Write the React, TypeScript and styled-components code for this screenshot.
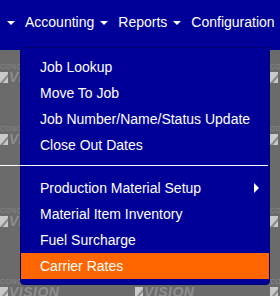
import React from "react";
import styled, { createGlobalStyle } from "styled-components";

const GlobalStyle = createGlobalStyle`
  html, body {
    margin: 0;
    padding: 0;
    background: #6b6b6b;
  }
  * {
    box-sizing: border-box;
  }
`;

const Page = styled.div`
  position: relative;
  width: 280px;
  height: 296px;
  overflow: hidden;
  font-family: "Liberation Sans", Arial, sans-serif;
  font-size: 14px;
  color: #ffffff;
`;

const NavBar = styled.nav`
  display: flex;
  align-items: flex-start;
  gap: 10px;
  height: 50px;
  padding: 12px 0 0 7px;
  background: #000099;
  white-space: nowrap;
  overflow: hidden;
`;

const NavItem = styled.div`
  display: flex;
  align-items: center;
  gap: 6px;
  height: 20px;
  line-height: 20px;
`;

const Caret = styled.span`
  display: block;
  width: 0;
  height: 0;
  margin-top: 2px;
  border-left: 4px solid transparent;
  border-right: 4px solid transparent;
  border-top: 4px solid #ffffff;
`;

// faint logo tiles behind the page
const Backdrop = styled.div`
  display: grid;
  grid-template-columns: repeat(3, 135px);
  grid-template-rows: 62px 82px 71px 40px;
  height: 246px;
  padding-top: 13px;
  background: #6b6b6b;
`;

const Tile = styled.div<{ covered?: boolean }>`
  display: flex;
  flex-direction: column;
  gap: 1px;
  visibility: ${({ covered }) => (covered ? "hidden" : "visible")};
`;

const TileSmall = styled.span`
  font-size: 7px;
  line-height: 7px;
  letter-spacing: 0.3px;
  color: #8a8a8a;
`;

const TileRow = styled.div`
  display: flex;
  align-items: flex-end;
  gap: 1px;
`;

const TileBig = styled.span`
  font-size: 14px;
  line-height: 12px;
  font-weight: bold;
  font-style: italic;
  color: #8e8e8e;
  letter-spacing: 0.5px;
`;

const Menu = styled.div`
  position: absolute;
  top: 47px;
  left: 20px;
  width: 250px;
  padding: 6px 0 5px;
  background: #000099;
  border: 1px solid #00006e;
  border-radius: 0 0 4px 4px;
`;

const MenuItem = styled.div<{ active?: boolean }>`
  display: flex;
  align-items: center;
  justify-content: space-between;
  height: 26px;
  line-height: 26px;
  padding: 0 10px 0 19px;
  background: ${({ active }) => (active ? "#ff6600" : "transparent")};
  white-space: nowrap;
`;

const Arrow = styled.span`
  display: block;
  width: 0;
  height: 0;
  border-top: 5px solid transparent;
  border-bottom: 5px solid transparent;
  border-left: 5px solid #ffffff;
`;

const Separator = styled.div`
  height: 1px;
  margin: 7px 1px 9px -21px;
  background: #ffffff;
`;

const LogoMark = () => (
  <svg width="8" height="11" viewBox="0 0 8 11">
    <rect x="0" y="0" width="8" height="11" fill="#c9c9c9" />
    <path d="M0 11 L8 2 L8 5 L3 11 Z" fill="#8a8a8a" />
  </svg>
);

const topItems = ["Job Lookup", "Move To Job", "Job Number/Name/Status Update", "Close Out Dates"];
const bottomItems = [
  { label: "Production Material Setup", sub: true },
  { label: "Material Item Inventory" },
  { label: "Fuel Surcharge" },
  { label: "Carrier Rates", active: true },
];

const App = () => {
  return (
    <Page>
      <GlobalStyle />
      <NavBar>
        <NavItem>
          <Caret />
        </NavItem>
        <NavItem>
          Accounting
          <Caret />
        </NavItem>
        <NavItem>
          Reports
          <Caret />
        </NavItem>
        <NavItem>
          Configuration
          <Caret />
        </NavItem>
      </NavBar>
      <Backdrop>
        {Array.from({ length: 12 }).map((_, i) => (
          // middle column sits under the open menu except on the last row
          <Tile key={"tile-" + i} covered={i % 3 === 1 && i < 9}>
            <TileSmall>CONCRETE</TileSmall>
            <TileRow>
              <LogoMark />
              <TileBig>VISION</TileBig>
            </TileRow>
          </Tile>
        ))}
      </Backdrop>
      <Menu>
        {topItems.map((label) => (
          <MenuItem key={label}>{label}</MenuItem>
        ))}
        <Separator />
        {bottomItems.map((item) => (
          <MenuItem key={item.label} active={item.active}>
            {item.label}
            {item.sub ? <Arrow /> : null}
          </MenuItem>
        ))}
      </Menu>
    </Page>
  );
};

export default App;
